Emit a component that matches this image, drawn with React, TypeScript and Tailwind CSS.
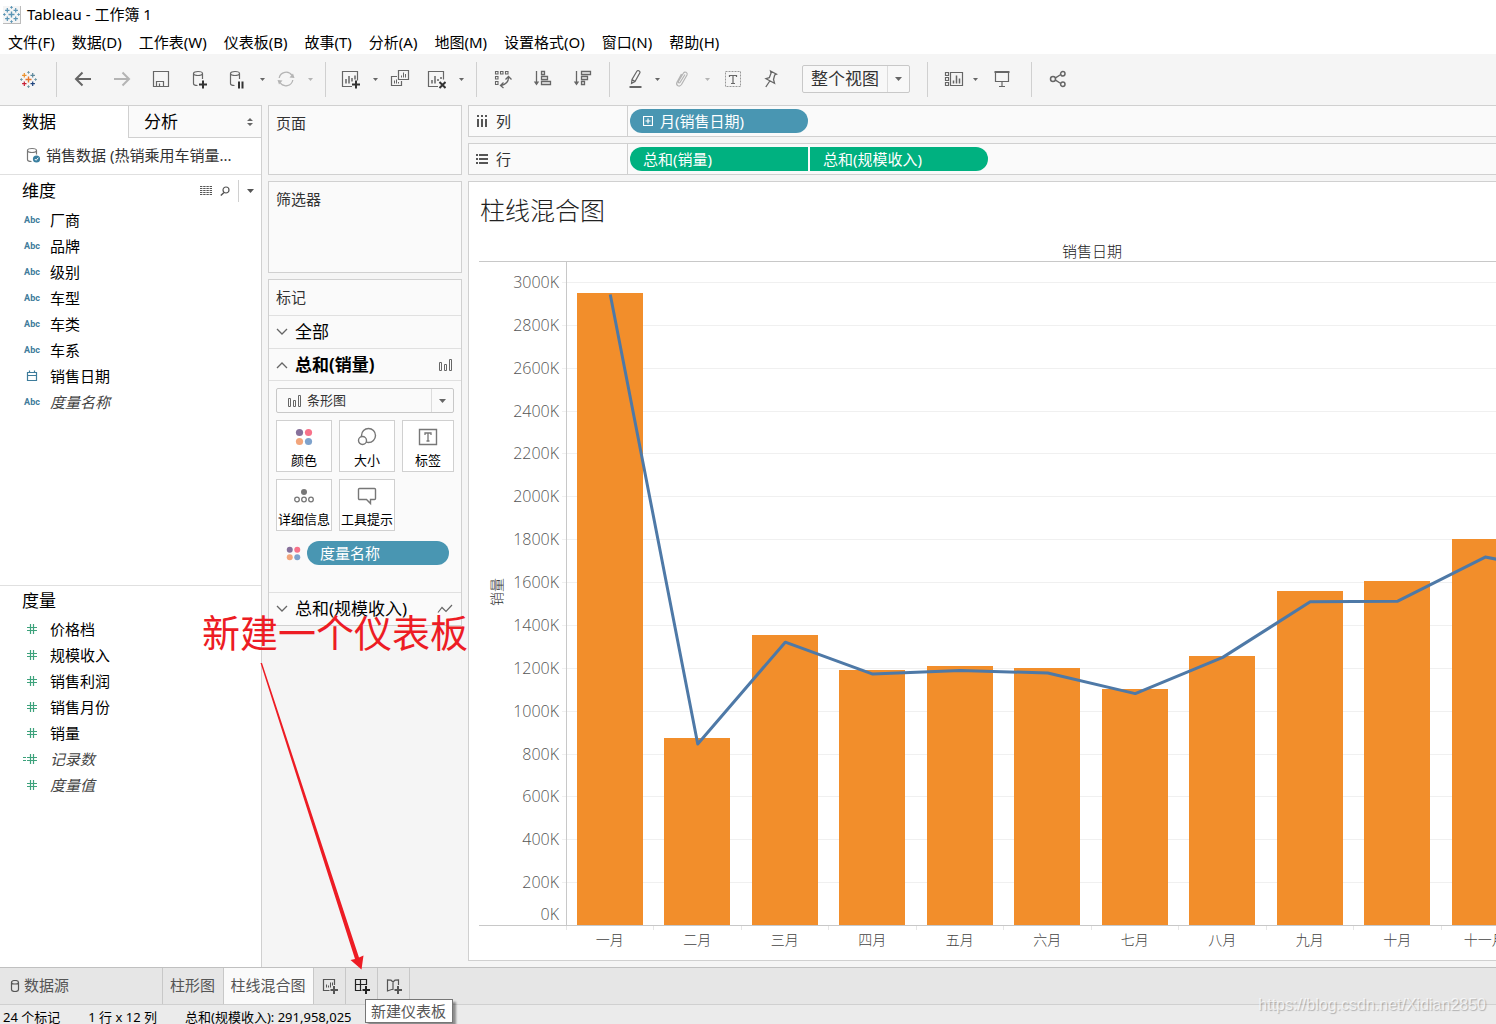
import * as React from "react"
import clsx from "clsx"

type IconProps = { className?: string }

/* ---------- data ---------- */

const menus = ["文件(F)", "数据(D)", "工作表(W)", "仪表板(B)", "故事(T)", "分析(A)", "地图(M)", "设置格式(O)", "窗口(N)", "帮助(H)"]

const dimensions = [
    { name: "厂商", kind: "text" },
    { name: "品牌", kind: "text" },
    { name: "级别", kind: "text" },
    { name: "车型", kind: "text" },
    { name: "车类", kind: "text" },
    { name: "车系", kind: "text" },
    { name: "销售日期", kind: "date" },
    { name: "度量名称", kind: "text", generated: true },
]

const measures = [
    { name: "价格档", kind: "number" },
    { name: "规模收入", kind: "number" },
    { name: "销售利润", kind: "number" },
    { name: "销售月份", kind: "number" },
    { name: "销量", kind: "number" },
    { name: "记录数", kind: "calc", generated: true },
    { name: "度量值", kind: "number", generated: true },
]

// sales = bars, revenue = line, both in thousands on the left axis
const months = [
    { label: "一月", sales: 2951, revenue: 2944 },
    { label: "二月", sales: 873, revenue: 847 },
    { label: "三月", sales: 1353, revenue: 1322 },
    { label: "四月", sales: 1190, revenue: 1173 },
    { label: "五月", sales: 1209, revenue: 1190 },
    { label: "六月", sales: 1199, revenue: 1178 },
    { label: "七月", sales: 1101, revenue: 1082 },
    { label: "八月", sales: 1256, revenue: 1251 },
    { label: "九月", sales: 1559, revenue: 1510 },
    { label: "十月", sales: 1605, revenue: 1513 },
    { label: "十一月", sales: 1801, revenue: 1719 },
    { label: "十二月", sales: 1905, revenue: 1640 },
]

/* ---------- icons ---------- */

const cross = (x: number, y: number, r: number) => `M${x - r} ${y}h${r * 2}M${x} ${y - r}v${r * 2}`

const Logo = ({ mono }: { mono?: boolean }) => {
    const c = mono ? Array(6).fill("#5b95b5") : ["#e8762d", "#eb912c", "#5b879b", "#c72035", "#1f447e", "#7199a6"]
    return (
        <svg width="17" height="17" viewBox="0 0 17 17" fill="none" aria-hidden="true">
            <path d={cross(8.5, 8.5, 3)} stroke={c[0]} strokeWidth="1.4" />
            <path d={cross(4.3, 4.3, 2.2)} stroke={c[1]} strokeWidth="1.2" />
            <path d={cross(12.7, 4.3, 2.2)} stroke={c[2]} strokeWidth="1.2" />
            <path d={cross(4.3, 12.7, 2.2)} stroke={c[3]} strokeWidth="1.2" />
            <path d={cross(12.7, 12.7, 2.2)} stroke={c[4]} strokeWidth="1.2" />
            <path d={cross(8.5, 1.4, 1.3) + cross(8.5, 15.6, 1.3) + cross(1.4, 8.5, 1.3) + cross(15.6, 8.5, 1.3)} stroke={c[5]} />
        </svg>
    )
}

const Svg = ({ w = 20, h = 20, children, className }: { w?: number; h?: number; children: React.ReactNode } & IconProps) => (
    <svg width={w} height={h} viewBox={`0 0 ${w} ${h}`} fill="none" stroke="currentColor" className={clsx("shrink-0", className)} aria-hidden="true">
        {children}
    </svg>
)

const BackIcon = () => (
    <Svg><path d="M18 10H3M9.500 3.500L3 10l6.500 6.500" strokeWidth="2" /></Svg>
)
const ForwardIcon = () => (
    <Svg className="text-[#b4b4b4]"><path d="M2 10h15M10.500 3.500L17 10l-6.500 6.500" strokeWidth="2" /></Svg>
)
const SaveIcon = () => (
    <Svg><path d="M2.500 2.500h15v15h-15zM5.500 17.500v-5h7v5M8.500 17v-2.500" strokeWidth="1.200" /></Svg>
)
const cylinder = "M3.500 4.500c0-1.300 2.200-2 4.500-2s4.500.7 4.500 2-2.200 2-4.500 2-4.500-.7-4.500-2zM3.500 4.500v10c0 1.200 1.800 2 4 2M12.500 4.500v5.500"
const NewDataIcon = () => (
    <Svg>
        <path d={cylinder} strokeWidth="1.200" />
        <path d="M9 15.500h8M13 11.500v8" stroke="#333" strokeWidth="2" />
    </Svg>
)
const PauseDataIcon = () => (
    <Svg>
        <path d={cylinder} strokeWidth="1.200" />
        <path d="M12 12.500v7M15.500 12.500v7" stroke="#333" strokeWidth="2" />
    </Svg>
)
const RefreshIcon = () => (
    <Svg className="text-[#b4b4b4]">
        <path d="M3.200 9A7 7 0 0 1 16 6.500M16.800 11A7 7 0 0 1 4 13.500" strokeWidth="1.300" />
        <path d="M13.500 8.500l5 .5-1.500-4.500zM6.500 11.500l-5-.5L3 15.500z" fill="currentColor" stroke="none" />
    </Svg>
)
const NewSheetIcon = () => (
    <Svg>
        <path d="M12 17.500H2.500v-15h15v9" strokeWidth="1.200" />
        <path d="M6 10v4.500M9 7v7.500M12 9v3.500M15 6.500v4" strokeWidth="1.500" />
        <path d="M12 15.500h8M16 11.500v8" stroke="#333" strokeWidth="2" />
    </Svg>
)
const DuplicateIcon = () => (
    <Svg>
        <path d="M8.500 1.500h10v9h-10zM7 7.500H1.500v9h10V12" strokeWidth="1.200" />
        <path d="M11.500 8.500v-2M13.500 8.500v-5M15.500 8.500v-3.500M4.500 14.500v-3M6.500 14.500v-4M8.500 14.500v-1.500" />
    </Svg>
)
const ClearIcon = () => (
    <Svg>
        <path d="M12 17.500H2.500v-15h15v8" strokeWidth="1.200" />
        <path d="M6 11v3.500M9 7v7.500M12 10v2M15 8v2" strokeWidth="1.500" />
        <path d="M13.500 13l6 6M19.500 13l-6 6" stroke="#333" strokeWidth="2" />
    </Svg>
)
const SwapIcon = () => (
    <Svg>
        <path d="M2.500 2.500h2.500v2.500h-2.500zM7.500 2.500h2.500v2.500h-2.500zM12.500 2.500h2.500v2.500h-2.500zM2.500 7.500h2.500v2.500h-2.500zM2.500 12.500h2.500v3h-2.500z" strokeWidth="1.100" />
        <path d="M15.500 8.500c0 4.500-3 7-7.500 8M12.500 10.500l3-3 3 3M10.500 13.500l-3 3 3 2.500" strokeWidth="1.300" />
    </Svg>
)
const SortAscIcon = () => (
    <Svg>
        <path d="M3.500 2v13M8.500 2.500h3v3h-3zM8.500 7.500h6v3h-6zM8.500 12.500h9v3h-9z" strokeWidth="1.300" />
        <path d="M.8 12.500h5.400l-2.700 4z" fill="currentColor" stroke="none" />
    </Svg>
)
const SortDescIcon = () => (
    <Svg>
        <path d="M3.500 2v13M8.500 2.500h9v3h-9zM8.500 7.500h6v3h-6zM8.500 12.500h3v3h-3z" strokeWidth="1.300" />
        <path d="M.8 12.500h5.400l-2.700 4z" fill="currentColor" stroke="none" />
    </Svg>
)
const HighlightIcon = () => (
    <Svg>
        <path d="M5.500 14.500l.5-4 5-8.500c.8-1 3.200 0 3 1.500l-5 9zM6 10.500l3 2" strokeWidth="1.200" />
        <path d="M3.500 18h12" strokeWidth="2" />
    </Svg>
)
const ClipIcon = () => (
    <Svg className="text-[#b4b4b4]">
        <path d="M13 5.500l-5 8c-.7 1-2.200.2-1.600-1L11.500 4c1.200-2 4.500-.5 3.500 2l-5.500 9.500c-2 3-6 1-4.500-2.200L9.500 5" strokeWidth="1.200" />
    </Svg>
)
const LabelIcon = () => (
    <Svg>
        <path d="M2.500 2.500h15v15h-15z" strokeDasharray="2 1" stroke="#999" />
        <path d="M6.500 8V6.500h7V8M10 6.500v8M8 14.500h4" strokeWidth="1.200" />
    </Svg>
)
const PinIcon = () => (
    <Svg>
        <path d="M10.500 2l6 3.200-1.800.8-1.200 4.500 1 3.700-8.500-4.500 3.300-1 1.700-4.500zM9.800 12l-4 6" strokeWidth="1.300" />
    </Svg>
)
const ShowMeIcon = () => (
    <Svg w={20}>
        <path d="M1.500 3.500h3v3h-3zM1.500 8.500h3v3h-3zM1.500 13.500h3v3h-3zM6.500 3.500h12v13h-12z" strokeWidth="1.200" />
        <path d="M9.500 14.500v-3M12.500 14.500v-8M15.500 14.500v-5" strokeWidth="1.500" />
    </Svg>
)
const PresentIcon = () => (
    <Svg>
        <path d="M2.500 3h15" strokeWidth="2" />
        <path d="M3.500 3v9.500h13V3M10 12.500v5M7 17.500h6" strokeWidth="1.200" />
    </Svg>
)
const ShareIcon = () => (
    <Svg>
        <path d="M7.500 8.800l5.300-3.300M7.500 11.200l5.300 3.300" strokeWidth="1.400" />
        <path d="M7.500 10a2.500 2.500 0 1 1-5 0 2.500 2.500 0 0 1 5 0zM17 4.800a2.200 2.200 0 1 1-4.400 0A2.200 2.200 0 0 1 17 4.800zM17 15.200a2.200 2.200 0 1 1-4.400 0A2.200 2.200 0 0 1 17 15.200z" strokeWidth="1.500" />
    </Svg>
)
const Caret = ({ className }: IconProps) => (
    <Svg w={7} h={4} className={className}><path d="M0 0h7L3.500 4z" fill="currentColor" stroke="none" /></Svg>
)
const SmallCaret = ({ className }: IconProps) => (
    <Svg w={5} h={3} className={className}><path d="M0 0h5L2.500 3z" fill="currentColor" stroke="none" /></Svg>
)
const HashIcon = ({ calc }: { calc?: boolean }) => (
    <Svg w={18} h={12} className="text-[#3da27c]">
        <path d="M4 4.500h10M4 7.500h10M7.500 1v10M10.500 1v10" strokeWidth="1.200" />
        {calc && <path d="M0 4.500h3M0 7.500h3" />}
    </Svg>
)
const CalendarIcon = () => (
    <Svg w={12} h={12} className="text-[#3e7c9b]"><path d="M1.500 2.500h9v8h-9zM1.500 5.500h9M3.500.5v2M8.500.5v2" strokeWidth="1.200" /></Svg>
)
const BarsIcon = () => (
    <Svg w={14} h={14}><path d="M.5 4.500h2v8h-2zM5.500 6.500h2v6h-2zM10.500 1.500h2v11h-2z" /></Svg>
)
const LineIcon = () => (
    <Svg w={16} h={12}><path d="M1 9.500l4-5 4 4L15 2" strokeWidth="1.200" /></Svg>
)
const Chevron = ({ up }: { up?: boolean }) => (
    <Svg w={12} h={8}><path d={up ? "M1 7l5-5 5 5" : "M1 1l5 5 5-5"} strokeWidth="1.300" /></Svg>
)
const ColorDots = ({ small }: { small?: boolean }) => (
    <svg width={small ? 15 : 18} height={small ? 15 : 18} viewBox="0 0 18 18" className="shrink-0" aria-hidden="true">
        <circle cx="4.500" cy="4.500" r="3.600" fill="#86709b" />
        <circle cx="13.500" cy="4.500" r="3.600" fill="#f8728a" />
        <circle cx="4.500" cy="13.500" r="3.600" fill="#f2a57b" />
        <circle cx="13.500" cy="13.500" r="3.600" fill="#7ea2cc" />
    </svg>
)
const SizeIcon = () => (
    <Svg><circle cx="11.500" cy="8.500" r="7" strokeWidth="1.400" /><circle cx="5.500" cy="13.500" r="4" fill="#fff" strokeWidth="1.400" /></Svg>
)
const TextIcon = () => (
    <Svg>
        <path d="M1.500 2.500h17v15h-17z" strokeWidth="1.400" />
        <path d="M7 8V6h6v2M10 6v8M8.500 14h3" strokeWidth="1.300" />
    </Svg>
)
const DetailIcon = () => (
    <Svg>
        <circle cx="10" cy="6" r="3" fill="currentColor" stroke="none" />
        <circle cx="3" cy="13.500" r="2.300" strokeWidth="1.300" />
        <circle cx="10" cy="13.500" r="2.300" strokeWidth="1.300" />
        <circle cx="17" cy="13.500" r="2.300" strokeWidth="1.300" />
    </Svg>
)
const TooltipIcon = () => (
    <Svg><path d="M2.500 2.500h15a1 1 0 0 1 1 1v9a1 1 0 0 1-1 1h-4v4l-4-4h-7a1 1 0 0 1-1-1v-9a1 1 0 0 1 1-1z" strokeWidth="1.400" /></Svg>
)

/* ---------- small parts ---------- */

const Separator = ({ className }: IconProps) => <div className={clsx("h-[35px] w-px bg-[#d0d0d0]", className)} />

const ToolButton = ({ label, className, children }: { label: string; className: string; children: React.ReactNode }) => (
    <button aria-label={label} className={clsx("flex h-8 items-center justify-center", className)}>
        {children}
    </button>
)

const Toolbar = () => (
    <div className="flex h-[51px] shrink-0 items-center bg-[#f5f5f5] pb-px text-[#666]">
        <ToolButton label="起始页" className="w-14"><Logo /></ToolButton>
        <Separator />
        <ToolButton label="撤消" className="ml-[6px] w-[39px]"><BackIcon /></ToolButton>
        <ToolButton label="重做" className="w-[39px]"><ForwardIcon /></ToolButton>
        <ToolButton label="保存" className="w-[39px]"><SaveIcon /></ToolButton>
        <ToolButton label="新建数据源" className="w-[39px]"><NewDataIcon /></ToolButton>
        <ToolButton label="暂停自动更新" className="w-9"><PauseDataIcon /></ToolButton>
        <ToolButton label="自动更新选项" className="w-[14px]"><SmallCaret /></ToolButton>
        <ToolButton label="运行更新" className="w-[34px]"><RefreshIcon /></ToolButton>
        <ToolButton label="运行更新选项" className="w-[14px]"><SmallCaret className="text-[#b4b4b4]" /></ToolButton>
        <Separator className="ml-2" />
        <ToolButton label="新建工作表" className="ml-[6px] w-9"><NewSheetIcon /></ToolButton>
        <ToolButton label="新建选项" className="w-[14px]"><SmallCaret /></ToolButton>
        <ToolButton label="复制" className="w-9"><DuplicateIcon /></ToolButton>
        <ToolButton label="清除工作表" className="w-9"><ClearIcon /></ToolButton>
        <ToolButton label="清除选项" className="w-[14px]"><SmallCaret /></ToolButton>
        <Separator className="ml-2" />
        <ToolButton label="交换行和列" className="ml-[6px] w-10"><SwapIcon /></ToolButton>
        <ToolButton label="升序排序" className="w-10"><SortAscIcon /></ToolButton>
        <ToolButton label="降序排序" className="w-10"><SortDescIcon /></ToolButton>
        <Separator className="ml-[6px]" />
        <ToolButton label="突出显示" className="ml-3 w-7"><HighlightIcon /></ToolButton>
        <ToolButton label="突出显示选项" className="w-[14px]"><SmallCaret /></ToolButton>
        <ToolButton label="组成员" className="w-9"><ClipIcon /></ToolButton>
        <ToolButton label="组选项" className="w-[14px]"><SmallCaret className="text-[#b4b4b4]" /></ToolButton>
        <ToolButton label="显示标记标签" className="w-[38px]"><LabelIcon /></ToolButton>
        <ToolButton label="固定轴" className="w-9"><PinIcon /></ToolButton>
        <div className="relative ml-[14px] h-7 w-[108px] rounded-xs border border-[#c8c8c8] bg-[#f8f8f8]">
            <select aria-label="适合" className="h-full w-full appearance-none pl-2 text-[17px] text-[#333] outline-none">
                <option>整个视图</option>
                <option>标准</option>
            </select>
            <span className="pointer-events-none absolute inset-y-0 right-0 flex w-[22px] items-center justify-center border-l border-[#dcdcdc]">
                <Caret />
            </span>
        </div>
        <Separator className="ml-[17px]" />
        <ToolButton label="智能推荐" className="ml-3 w-7"><ShowMeIcon /></ToolButton>
        <ToolButton label="智能推荐选项" className="w-[14px]"><SmallCaret /></ToolButton>
        <ToolButton label="演示模式" className="w-10"><PresentIcon /></ToolButton>
        <Separator className="ml-[9px]" />
        <ToolButton label="共享" className="ml-[6px] w-10"><ShareIcon /></ToolButton>
    </div>
)

const FieldIcon = ({ kind }: { kind: string }) => {
    if (kind === "date") return <CalendarIcon />
    if (kind === "number") return <HashIcon />
    if (kind === "calc") return <HashIcon calc />
    return <span className="pt-px font-[Roboto,sans-serif] text-[9px] font-bold text-[#3e7c9b]">Abc</span>
}

const FieldList = ({ fields }: { fields: { name: string; kind: string; generated?: boolean }[] }) => (
    <ul>
        {fields.map((f) => (
            <li key={f.name} className="flex h-[26px] items-center pl-[22px]">
                <span className="mr-2 flex w-5 items-center justify-center"><FieldIcon kind={f.kind} /></span>
                <span className={clsx("text-[15px]", f.generated && "italic text-[#444]")}>{f.name}</span>
            </li>
        ))}
    </ul>
)

const DataPane = () => (
    <aside className="flex w-[262px] shrink-0 flex-col border-r border-t border-[#d0d0d0] bg-white text-black">
        <div className="flex h-8 shrink-0 text-[17px]">
            <button className="w-32 pl-[22px] text-left">数据</button>
            <button className="flex flex-1 items-center justify-between border-b border-l border-[#d0d0d0] bg-[#fafafa] pl-[15px] pr-2">
                分析
                <Svg w={6} h={8} className="text-[#666]">
                    <path d="M0 3h6L3 0zM0 5h6L3 8z" fill="currentColor" stroke="none" />
                </Svg>
            </button>
        </div>
        <div className="flex h-[37px] shrink-0 items-center border-b border-[#e0e0e0] pb-px pl-[26px] text-[15px] text-[#333]">
            <Svg w={16} h={18} className="mr-1 text-[#777]">
                <path d="M1.500 3.500c0-1.300 2-2 4.500-2s4.500.7 4.500 2-2 2-4.500 2-4.500-.7-4.500-2zM1.500 3.500v9c0 1.200 1.800 2 4 2M10.500 3.500v4" strokeWidth="1.200" />
                <circle cx="10.500" cy="12" r="3.600" fill="#3a7fa0" stroke="none" />
                <path d="M8.800 12l1.300 1.300 2.200-2.600" stroke="#fff" />
            </Svg>
            销售数据 (热销乘用车销量...
        </div>
        <section className="flex h-[411px] shrink-0 flex-col border-b border-[#e0e0e0]">
            <div className="flex h-8 items-center pl-[22px] pr-[7px]">
                <h2 className="flex-1 text-[17px]">维度</h2>
                <div className="flex items-center text-[#555]">
                    <button aria-label="查看数据">
                        <Svg w={12} h={10}><path d="M0 .5h12M0 2.500h12M0 4.500h12M0 6.500h12M0 8.500h12" strokeDasharray="2.400 .8" /></Svg>
                    </button>
                    <button aria-label="查找字段" className="ml-2">
                        <Svg w={10} h={10}><circle cx="6" cy="4" r="3" strokeWidth="1.200" /><path d="M4 6.500L.8 9.500" strokeWidth="1.400" /></Svg>
                    </button>
                    <div className="ml-2 mr-2 h-[22px] w-px bg-[#d0d0d0]" />
                    <button aria-label="维度菜单"><Caret /></button>
                </div>
            </div>
            <FieldList fields={dimensions} />
        </section>
        <section>
            <h2 className="flex h-[30px] items-center pl-[22px] text-[17px]">度量</h2>
            <FieldList fields={measures} />
        </section>
    </aside>
)

const MarkButton = ({ label, icon, className }: { label: string; icon: React.ReactNode; className: string }) => (
    <button className={clsx("flex h-[52px] flex-col items-center border border-[#d0d0d0] bg-white pt-[6px] text-[13px] leading-5 text-black", className)}>
        <span className="mb-[3px] flex h-5 items-center text-[#777]">{icon}</span>
        <span className="whitespace-nowrap">{label}</span>
    </button>
)

const Cards = () => (
    <div className="flex w-[194px] shrink-0 flex-col gap-[6px] text-[15px] text-[#333]">
        <section className="h-[70px] border border-[#d0d0d0] bg-[#fafafa] px-[7px] py-[7px] leading-5">页面</section>
        <section className="h-[92px] border border-[#d0d0d0] bg-[#fafafa] px-[7px] py-[7px] leading-5">筛选器</section>
        <section className="border border-[#d0d0d0] bg-[#fafafa]">
            <h2 className="flex h-[35px] items-center px-[7px]">标记</h2>
            <button className="flex h-[33px] w-full items-center gap-[7px] border-t border-[#e0e0e0] px-[7px] text-[17px] text-black">
                <span className="text-[#666]"><Chevron /></span>全部
            </button>
            <button className="flex h-[33px] w-full items-center gap-[7px] border-y border-[#e0e0e0] pl-[7px] pr-2 text-[17px] font-bold text-black">
                <span className="text-[#666]"><Chevron up /></span>
                <span className="flex-1 text-left">总和(销量)</span>
                <span className="text-[#666]"><BarsIcon /></span>
            </button>
            <div className="flex h-[211px] flex-col px-[7px] pt-[7px]">
                <div className="relative flex h-[25px] items-center rounded-xs border border-[#c8c8c8] bg-[#fafafa] pl-[11px] text-[#666]">
                    <BarsIcon />
                    <select aria-label="标记类型" className="h-full flex-1 appearance-none pl-[5px] text-[13px] text-[#333] outline-none">
                        <option>条形图</option>
                        <option>线</option>
                    </select>
                    <span className="pointer-events-none absolute inset-y-0 right-0 flex w-[22px] items-center justify-center border-l border-[#dcdcdc]">
                        <Caret />
                    </span>
                </div>
                <div className="mt-[7px] flex flex-wrap gap-[7px]">
                    <MarkButton label="颜色" className="w-14" icon={<ColorDots />} />
                    <MarkButton label="大小" className="w-14" icon={<SizeIcon />} />
                    <MarkButton label="标签" className="w-[52px]" icon={<TextIcon />} />
                    <MarkButton label="详细信息" className="w-14" icon={<DetailIcon />} />
                    <MarkButton label="工具提示" className="w-14" icon={<TooltipIcon />} />
                </div>
                <div className="mt-[10px] flex items-center gap-[6px] pl-[10px]">
                    <ColorDots small />
                    <button className="h-6 w-[142px] rounded-full bg-[#4996b2] pl-[13px] text-left leading-6 text-white">度量名称</button>
                </div>
            </div>
            <button className="flex h-[33px] w-full items-center gap-[7px] border-t border-[#e0e0e0] px-[7px] text-[17px] text-black">
                <span className="text-[#666]"><Chevron /></span>
                <span className="flex-1 text-left">总和(规模收入)</span>
                <span className="pr-px text-[#666]"><LineIcon /></span>
            </button>
        </section>
    </div>
)

const Shelf = ({ label, icon, children }: { label: string; icon: React.ReactNode; children: React.ReactNode }) => (
    <div className="flex h-8 shrink-0 border-y border-l border-[#d0d0d0] bg-[#fafafa] text-[15px]">
        <div className="flex w-[159px] items-center gap-2 border-r border-[#d0d0d0] pl-[7px] text-[#333]">
            {icon}
            {label}
        </div>
        <div className="flex items-center gap-[2px] pl-[2px] text-white">{children}</div>
    </div>
)

/* ---------- chart ---------- */

const AXIS_X = 88
const TOP = 21
const BASE = 685
const STEP = 87.5
const PX_PER_K = 643 / 3000

const Chart = () => {
    const y = (v: number) => BASE - v * PX_PER_K
    const cx = (i: number) => AXIS_X - 1 + STEP * (i + 0.5)
    const width = AXIS_X + STEP * months.length
    const ticks = Array.from({ length: 16 }, (_, i) => i * 200)

    return (
        <svg width={width} height="714" viewBox={`0 0 ${width} 714`} role="img" aria-label="销售日期 / 销量" className="font-['Open_Sans','Noto_Sans_CJK_SC',sans-serif] font-light">
            <text x={AXIS_X + (STEP * months.length) / 2} y="17" textAnchor="middle" fontSize="15" fill="#222">销售日期</text>

            {/* grid lines and value axis */}
            {ticks.map((t) => (
                <g key={t}>
                    {t > 0 && <rect x={AXIS_X - 5} y={Math.round(y(t))} width={width} height="1" fill="#f0f0f0" />}
                    <text x="80" y={t === 0 ? BASE - 5 : Math.round(y(t)) + 6} textAnchor="end" fontSize="16" fill="#555">{t}K</text>
                </g>
            ))}
            <text transform="translate(23 352) rotate(-90)" textAnchor="middle" fontSize="14" fill="#333">销量</text>

            {months.map((m, i) => (
                <g key={m.label}>
                    <rect x={Math.floor(cx(i) - 32.500)} y={Math.round(y(m.sales))} width="66" height={BASE - Math.round(y(m.sales))} fill="#f28e2b" />
                    <rect x={Math.floor(AXIS_X + STEP * i) - 1} y={BASE + 1} width="1" height="4" fill="#e6e6e6" />
                    <text x={cx(i)} y={BASE + 20} textAnchor="middle" fontSize="14" fill="#444">{m.label}</text>
                </g>
            ))}
            <polyline
                points={months.map((m, i) => `${cx(i) + 0.5},${y(m.revenue) + 0.5}`).join(" ")}
                fill="none"
                stroke="#4e79a7"
                strokeWidth="3"
                strokeLinejoin="round"
            />

            <rect x="0" y={TOP} width={width} height="1" fill="#c8c8c8" />
            <rect x="0" y={BASE} width={width} height="1" fill="#c8c8c8" />
            <rect x={AXIS_X - 1} y={TOP} width="1" height={BASE - TOP} fill="#c8c8c8" />
        </svg>
    )
}

const Worksheet = () => (
    <main className="flex min-w-0 flex-1 flex-col gap-[6px]">
        <Shelf label="列" icon={<Svg w={12} h={12} className="text-[#555]"><path d="M2 0v2M6 0v2M10 0v2M2 4v8M6 4v8M10 4v8" strokeWidth="2" /></Svg>}>
            <button className="flex h-6 w-[178px] items-center gap-[7px] rounded-full bg-[#4996b2] pl-[13px]">
                <Svg w={10} h={10}><path d="M.5.5h9v9h-9zM5 2.500v5M2.500 5h5" strokeWidth="1.200" /></Svg>
                月(销售日期)
            </button>
        </Shelf>
        <Shelf label="行" icon={<Svg w={12} h={12} className="text-[#555]"><path d="M0 2h2M0 6h2M0 10h2M3 2h9M3 6h9M3 10h9" strokeWidth="2" /></Svg>}>
            <button className="h-6 w-[178px] rounded-l-full bg-[#00b180] pl-[13px] text-left leading-6">总和(销量)</button>
            <button className="h-6 w-[178px] rounded-r-full bg-[#00b180] pl-[13px] text-left leading-6">总和(规模收入)</button>
        </Shelf>
        <section className="flex-1 overflow-hidden border-y border-l border-[#d0d0d0] bg-white pl-[10px]">
            <h1 className="flex h-[58px] items-center pl-px text-[25px] font-light text-[#222]">柱线混合图</h1>
            <Chart />
        </section>
    </main>
)

/* ---------- bottom ---------- */

const SheetTabs = () => (
    <nav className="flex h-[37px] shrink-0 border-t border-[#c0c0c0] bg-[#e6e6e6] text-[15px] text-[#555]">
        <button className="flex w-[163px] items-center gap-1 border-r border-[#c8c8c8] pb-px pl-[10px]">
            <Svg w={10} h={12}><path d="M1.500 2.500c0-1.200 1.500-2 3.500-2s3.500.8 3.500 2-1.500 1.500-3.500 1.500-3.500-.3-3.500-1.500zM1.500 2.500v7c0 1.200 1.500 2 3.500 2s3.500-.8 3.500-2v-7" strokeWidth="1.200" /></Svg>
            数据源
        </button>
        <button className="w-[61px] border-r border-[#c8c8c8] pb-px pr-px">柱形图</button>
        <button className="w-[90px] border-r border-[#c8c8c8] bg-[#fafafa] pb-px pr-px">柱线混合图</button>
        <button aria-label="新建工作表" className="flex w-8 items-center justify-center border-r border-[#c8c8c8]">
            <Svg w={16} h={16}>
                <path d="M7.500 12.500H1.500v-11h11V7" strokeWidth="1.200" />
                <path d="M4.500 9.500v-3M6.500 9.500v-2M8.500 9.500v-5M10.500 7.500v-3" />
                <path d="M8.500 12h7.500M12 8v8" strokeWidth="2" />
            </Svg>
        </button>
        <div className="relative flex w-8 border-r border-[#c8c8c8]">
            <button aria-label="新建仪表板" aria-describedby="new-dashboard-tip" className="flex flex-1 items-center justify-center text-[#222]">
                <Svg w={16} h={16}>
                    <path d="M7.500 12.500H1.500v-11h11V7M1.500 6.500h11M6.500 1.500v11" strokeWidth="1.200" />
                    <path d="M8.500 12h7.500M12 8v8" strokeWidth="2" />
                </Svg>
            </button>
            <div id="new-dashboard-tip" role="tooltip" className="absolute left-[19px] top-[31px] z-20 flex h-6 w-[88px] items-center justify-center whitespace-nowrap border border-[#767676] bg-white pr-px text-[#575757] shadow-[3px_3px_2px_rgba(0,0,0,0.4)]">
                新建仪表板
            </div>
        </div>
        <button aria-label="新建故事" className="flex w-8 items-center justify-center border-r border-[#c8c8c8]">
            <Svg w={16} h={16}>
                <path d="M7.500 11.500L5.500 11.500 1.500 13V2l3.500.2 2 1.800 2-1.800 3.500-.2v5M7 4v7.500" strokeWidth="1.200" />
                <path d="M8.500 12h7.500M12 8v8" strokeWidth="2" />
            </Svg>
        </button>
    </nav>
)

const StatusBar = () => (
    <footer className="flex h-5 shrink-0 gap-7 overflow-hidden border-t border-[#d0d0d0] bg-[#ebebeb] pl-[3px] pt-[2px] text-[13px] leading-5 text-black">
        <span>24 个标记</span>
        <span>1 行 x 12 列</span>
        <span>总和(规模收入): 291,958,025</span>
    </footer>
)

const App = () => {
    return (
        <div className="relative flex h-screen flex-col overflow-hidden bg-[#f5f5f5] font-['Noto_Sans','Noto_Sans_CJK_SC',sans-serif]">
            <header className="shrink-0 bg-white text-[15px] text-black">
                <div className="flex h-[30px] items-center gap-[6px] pb-px pl-[3px]">
                    <span className="border-b border-r border-[#bbb] bg-[#f5f5f5]"><Logo mono /></span>
                    Tableau - 工作簿 1
                </div>
                <div className="flex h-6 items-center gap-[17px] pl-2">
                    {menus.map((m) => (
                        <button key={m}>{m}</button>
                    ))}
                </div>
            </header>
            <Toolbar />

            <div className="flex min-h-0 flex-1">
                <DataPane />
                <div className="flex min-w-0 flex-1 gap-[6px] pb-[6px] pl-[6px]">
                    <Cards />
                    <Worksheet />
                </div>
            </div>

            <SheetTabs />
            <StatusBar />

            {/* Red callout pointing at the new dashboard tab */}
            <div className="pointer-events-none absolute left-[202px] top-[608px] z-10 whitespace-nowrap text-[38px] leading-[48px] text-[#ed1c24]">新建一个仪表板</div>
            <svg width="110" height="310" viewBox="0 0 110 310" className="pointer-events-none absolute left-[256px] top-[661px] z-10" aria-hidden="true">
                <path d="M4.500 2l1.500 0 97 294.500 4.500-2-2 14-11-9.500 4.500-1z" fill="#ed1c24" />
            </svg>

            {/* Watermark */}
            <div className="pointer-events-none absolute bottom-2 right-[10px] font-['Liberation_Sans',sans-serif] text-base leading-[22px] text-white/70 [text-shadow:1px_1px_1px_rgba(0,0,0,0.25)]">
                https://blog.csdn.net/Xidian2850
            </div>
        </div>
    )
}

export default App
